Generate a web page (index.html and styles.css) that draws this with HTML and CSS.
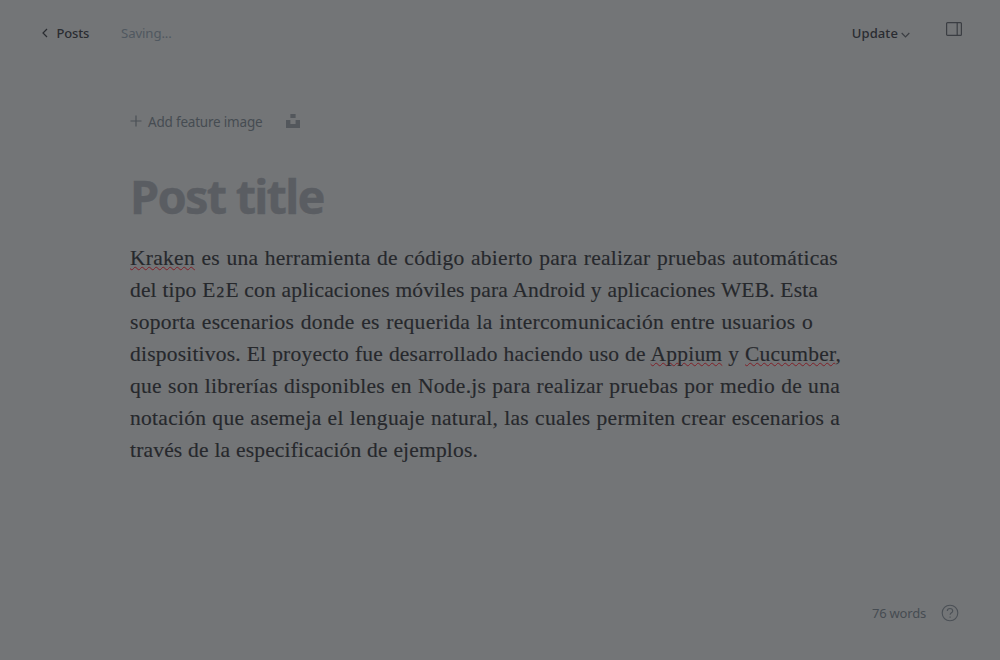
FILE: index.html
```html
<!DOCTYPE html>
<html lang="es">
<head>
<meta charset="utf-8">
<title>Editor</title>
<link rel="stylesheet" href="styles.css">
</head>
<body>
<div class="editor">
  <header class="topbar">
    <a class="back"><svg width="6" height="10" viewBox="0 0 6 10"><path d="M5 1 1 5l4 4"/></svg><span class="back-label">Posts</span></a>
    <span class="status">Saving...</span>
    <button class="update"><span class="update-label">Update</span><svg width="9" height="6" viewBox="0 0 9 6"><path d="M.7 1 4.5 4.8 8.3 1"/></svg></button>
    <svg class="sidebar-icon" width="16" height="14" viewBox="0 0 16 14"><rect x=".6" y=".6" width="14.8" height="12.8" rx="1"/><path d="M11.2.6v12.8"/></svg>
  </header>
  <main class="canvas">
    <div class="feature">
      <svg class="plus" width="12" height="12" viewBox="0 0 12 12"><path d="M6 .5v11M.5 6h11"/></svg>
      <span class="feature-label">Add feature image</span>
      <svg class="unsplash" width="14" height="14" viewBox="0 0 14 14"><path d="M4.4 0h5.2v3.9H4.4zM0 6.1h4.4V10h5.2V6.1H14V14H0z"/></svg>
    </div>
    <h1 class="title"><span>Post title</span></h1>
    <div class="body">
      <p class="line l1"><span class="typo">Kraken</span> es una herramienta de código abierto para realizar pruebas automáticas</p>
      <p class="line l2">del tipo E<span class="oldstyle">2</span>E con aplicaciones móviles para Android y aplicaciones WEB. Esta</p>
      <p class="line l3">soporta escenarios donde es requerida la intercomunicación entre usuarios o</p>
      <p class="line l4">dispositivos. El proyecto fue desarrollado haciendo uso de <span class="typo">Appium</span> y <span class="typo">Cucumber</span>,</p>
      <p class="line l5">que son librerías disponibles en Node.js para realizar pruebas por medio de una</p>
      <p class="line l6">notación que asemeja el lenguaje natural, las cuales permiten crear escenarios a</p>
      <p class="line l7">través de la especificación de ejemplos.</p>
    </div>
  </main>
  <footer class="footer">
    <span class="words">76 words</span>
    <svg class="help" width="18" height="18" viewBox="0 0 18 18"><circle cx="9" cy="9" r="7.8"/><path d="M6.3 7.1C6.3 5.4 7.5 4.5 9 4.5s2.7 1 2.7 2.4c0 1.8-2.6 2-2.6 3.9M9.1 12.4v1.3"/></svg>
  </footer>
</div>
</body>
</html>
```
FILE: styles.css
```css
* { box-sizing: border-box; }
body { margin: 0; background: #737577; }
svg { fill: none; stroke-width: 1.2; flex: none; display: block; }
.editor {
  width: 1000px; height: 660px; display: flex; flex-direction: column;
  font-family: "Noto Sans", "Open Sans", sans-serif; font-size: 13px; line-height: 20px;
  color: #2a2c31; white-space: nowrap; overflow: hidden;
}
.topbar { display: flex; height: 66px; padding: 23px 38px 0 42px; }
.back { display: flex; width: 79px; }
.back svg { margin: 5px 8.5px 0 0; stroke: #2a2c31; }
.back-label, .update-label { font-weight: 500; }
.back-label { letter-spacing: -.15px; }
.status { color: #505860; font-size: 13.2px; letter-spacing: -.1px; }
.update { display: flex; margin: 0 36px 0 auto; padding: 0; border: 0; background: none; font: inherit; color: inherit; }
.update-label { letter-spacing: .1px; }
.update svg { margin: 9px 0 0 3px; stroke: #3b3e43; }
.sidebar-icon { stroke: #3b3e43; margin-top: -1px; }
.canvas { flex: 1; padding: 46px 130px 0; }
.feature { display: flex; color: #464c52; font-size: 13.5px; letter-spacing: -.2px; }
.plus { stroke: #4b5056; margin: 3px 6px 0 0; }
.feature-label { width: 138px; }
.unsplash { fill: #53575c; margin-top: 2px; }
.title { margin: 32px 0 0; font: 700 47px/64px "Noto Sans", "Open Sans", sans-serif; color: #5a5d62; letter-spacing: -1.8px; -webkit-text-stroke: .4px #5a5d62; }
.body { margin-top: 14px; font: 21.5px/32px "Liberation Serif", serif; color: #26282c; -webkit-text-stroke: .15px #26282c; }
.line { margin: 0; text-align-last: justify; letter-spacing: .28px; height: 32px; }
.l1 { width: 708px; }
.l2 { width: 688px; letter-spacing: .16px; }
.l3 { width: 683px; }
.l4 { width: 711px; letter-spacing: .21px; }
.l5 { width: 710px; }
.l6 { width: 710px; }
.l7 { width: 348px; letter-spacing: .18px; }
.oldstyle { font-size: 15.5px; -webkit-text-stroke-width: .3px; padding: 0 1px; }
.typo { text-decoration: underline wavy #7f2028 1px; text-underline-offset: 1px; text-decoration-skip-ink: none; }
.footer { display: flex; justify-content: flex-end; height: 56px; padding-right: 41px; color: #464c52; }
.words { margin-top: -1px; letter-spacing: -.2px; }
.help { stroke: #4b5056; margin-left: 15px; stroke-width: 1.1; }
```
